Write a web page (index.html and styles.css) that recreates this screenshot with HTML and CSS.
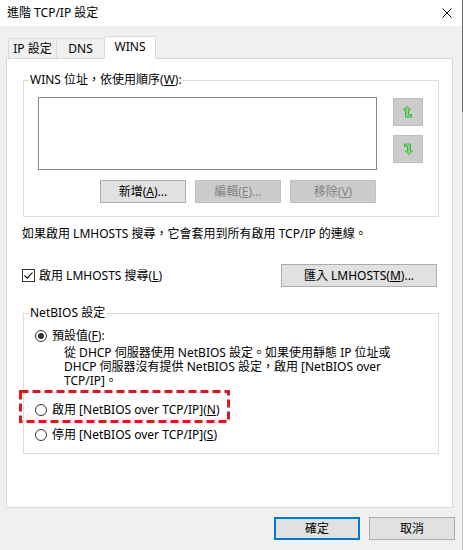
FILE: index.html
```html
<!DOCTYPE html>
<html lang="zh-Hant">
<head>
<meta charset="utf-8">
<title>進階 TCP/IP 設定</title>
<link rel="stylesheet" href="styles.css">
</head>
<body>
<div class="window">
  <div class="titlebar">
    <span class="title">進階 TCP/IP 設定</span>
    <svg class="close" width="10" height="10" viewBox="0 0 10 10"><path d="M0.5 0.5 L9.5 9.5 M9.5 0.5 L0.5 9.5" stroke="#000" stroke-width="1"/></svg>
  </div>
  <div class="content">
    <div class="tabs">
      <div class="tab tab-ip">IP 設定</div>
      <div class="tab tab-dns">DNS</div>
      <div class="tab tab-wins active">WINS</div>
    </div>
    <div class="panel">
      <fieldset class="group">
        <legend>WINS 位址，依使用順序(<u>W</u>):</legend>
        <div class="wins-body">
          <div class="wins-left">
            <div class="listbox"></div>
            <div class="btn-row">
              <button class="btn">新增(<u>A</u>)...</button>
              <button class="btn disabled">編輯(<u>E</u>)...</button>
              <button class="btn disabled">移除(<u>V</u>)</button>
            </div>
          </div>
          <div class="arrows">
            <button class="arrow-btn">
              <svg width="10" height="12" viewBox="0 0 10 12"><path d="M4 0.5 L7.5 4 L5.5 4 L5.5 8.5 L8.5 8.5 L8.5 11 L2.5 11 L2.5 4 L0.5 4 Z" fill="#78e278" stroke="#49aa49" stroke-width="1"/></svg>
            </button>
            <button class="arrow-btn">
              <svg width="10" height="12" viewBox="0 0 10 12"><g transform="rotate(180 5 6)"><path d="M4 0.5 L7.5 4 L5.5 4 L5.5 8.5 L8.5 8.5 L8.5 11 L2.5 11 L2.5 4 L0.5 4 Z" fill="#78e278" stroke="#49aa49" stroke-width="1"/></g></svg>
            </button>
          </div>
        </div>
      </fieldset>

      <p class="note">如果啟用 LMHOSTS 搜尋，它會套用到所有啟用 TCP/IP 的連線。</p>

      <div class="lm-row">
        <label class="check">
          <span class="checkbox"><svg width="11" height="11" viewBox="0 0 11 11"><path d="M1.5 5.5 L4.2 8.2 L9.5 2.5" fill="none" stroke="#000" stroke-width="1.1"/></svg></span>
          <span>啟用 LMHOSTS 搜尋(<u>L</u>)</span>
        </label>
        <button class="btn btn-wide">匯入 LMHOSTS(<u>M</u>)...</button>
      </div>

      <fieldset class="group netbios">
        <legend>NetBIOS 設定</legend>
        <div class="netbios-body">
          <div class="radio-row">
            <span class="radio checked"></span>
            <span>預設值(<u>F</u>):</span>
          </div>
          <p class="desc">從 DHCP 伺服器使用 NetBIOS 設定。如果使用靜態 IP 位址或<br>DHCP 伺服器沒有提供 NetBIOS 設定，啟用 [NetBIOS over<br>TCP/IP]。</p>
          <div class="radio-row highlight">
            <svg class="mark" width="211" height="33" viewBox="0 0 211 33"><rect x="1.5" y="1.5" width="208" height="30" fill="none" stroke="#e2141c" stroke-width="3" stroke-dasharray="8 4"/></svg>
            <span class="radio"></span>
            <span>啟用 [NetBIOS over TCP/IP](<u>N</u>)</span>
          </div>
          <div class="radio-row last">
            <span class="radio"></span>
            <span>停用 [NetBIOS over TCP/IP](<u>S</u>)</span>
          </div>
        </div>
      </fieldset>
    </div>
    <div class="footer">
      <button class="btn primary">確定</button>
      <button class="btn">取消</button>
    </div>
  </div>
</div>
</body>
</html>
```

FILE: styles.css
```css
* { box-sizing: border-box; }

html, body {
  margin: 0;
  padding: 0;
}

body {
  font-family: "Noto Sans", "Noto Sans CJK TC", sans-serif;
  font-size: 12px;
  line-height: 14px;
  color: #000;
}

.window {
  width: 463px;
  height: 550px;
  background:
    linear-gradient(#6b6b6b, #6b6b6b) right top / 1px 112px no-repeat,
    linear-gradient(#c6c6c6, #c6c6c6) right top / 1px 100% no-repeat,
    #f0f0f0;
  overflow: hidden;
}

.titlebar {
  height: 26px;
  width: 462px;
  background: #fff;
  display: flex;
  align-items: center;
  justify-content: space-between;
  padding: 0 10px 0 7px;
}

.title {
  line-height: 16px;
}

.close {
  display: block;
}

.content {
  padding: 10px 0 0 6px;
}

.tabs {
  display: flex;
  align-items: flex-end;
  height: 22px;
  margin-left: 2px;
}

.tab {
  height: 20px;
  border: 1px solid #d9d9d9;
  border-bottom: none;
  background: #f0f0f0;
  display: flex;
  align-items: center;
  justify-content: center;
  line-height: 14px;
}

.tab-ip { width: 49px; }

.tab-dns {
  width: 47px;
  border-left: none;
  border-right: none;
}

.tab-wins {
  width: 52px;
  height: 23px;
  margin-bottom: -1px;
  background: #fff;
  position: relative;
  z-index: 1;
  padding-bottom: 2px;
}

.panel {
  width: 447px;
  height: 450px;
  background: #fff;
  border: 1px solid #d9d9d9;
  padding: 14px 13px 0 16px;
}

.group {
  margin: 0;
  padding: 0;
  min-width: 0;
  border: 1px solid #dcdcdc;
}

.group legend {
  margin-left: 5px;
  padding: 0 1px;
  line-height: 14px;
}

.wins-body {
  display: flex;
  padding: 10px 15px 13px 14px;
}

.wins-left {
  width: 339px;
}

.listbox {
  height: 73px;
  border: 1px solid #828790;
  background: #fff;
}

.btn-row {
  display: flex;
  justify-content: flex-end;
  gap: 9px;
  margin-top: 10px;
  padding-right: 1px;
}

.btn {
  font: inherit;
  line-height: 14px;
  width: 86px;
  height: 23px;
  padding: 0;
  margin: 0;
  background: #e1e1e1;
  border: 1px solid #adadad;
  color: #000;
}

.btn.disabled {
  background: #cccccc;
  border-color: #bfbfbf;
  color: #838383;
}

.btn-wide {
  width: 156px;
  margin-right: 2px;
}

.btn.primary {
  border: 2px solid #0078d7;
}

.arrows {
  margin-left: 16px;
  margin-top: 1px;
  display: flex;
  flex-direction: column;
  gap: 9px;
}

.arrow-btn {
  width: 30px;
  height: 28px;
  padding: 0;
  margin: 0;
  background: #cccccc;
  border: 1px solid #bfbfbf;
  display: flex;
  align-items: center;
  justify-content: center;
}

.arrow-btn svg {
  display: block;
}

.note {
  margin: 10px 0 0 -1px;
}

.lm-row {
  display: flex;
  justify-content: space-between;
  align-items: center;
  margin-top: 23px;
  height: 23px;
}

.check {
  display: flex;
  align-items: center;
  gap: 4px;
  margin-left: -1px;
}

.checkbox {
  width: 13px;
  height: 13px;
  border: 1px solid #333;
  background: #fff;
  display: flex;
  align-items: center;
  justify-content: center;
}

.checkbox svg {
  display: block;
}

.netbios {
  margin-top: 19px;
}

.netbios-body {
  padding: 8px 0 10px 11px;
}

.radio-row {
  display: flex;
  align-items: center;
  gap: 5px;
  height: 16px;
}

.radio {
  width: 12px;
  height: 12px;
  border-radius: 50%;
  border: 1px solid #333;
  background: #fff;
  display: flex;
  align-items: center;
  justify-content: center;
  flex: none;
}

.radio.checked::after {
  content: "";
  width: 6px;
  height: 6px;
  border-radius: 50%;
  background: #333;
}

.desc {
  margin: 2px 0 0 29px;
  line-height: 14px;
}

.highlight {
  position: relative;
  margin-top: 14px;
}

.highlight .mark {
  position: absolute;
  left: -16px;
  top: -12px;
}

.radio-row.last {
  margin-top: 9px;
}

.footer {
  display: flex;
  justify-content: flex-end;
  gap: 9px;
  padding: 9px 8px 0 0;
}
```
